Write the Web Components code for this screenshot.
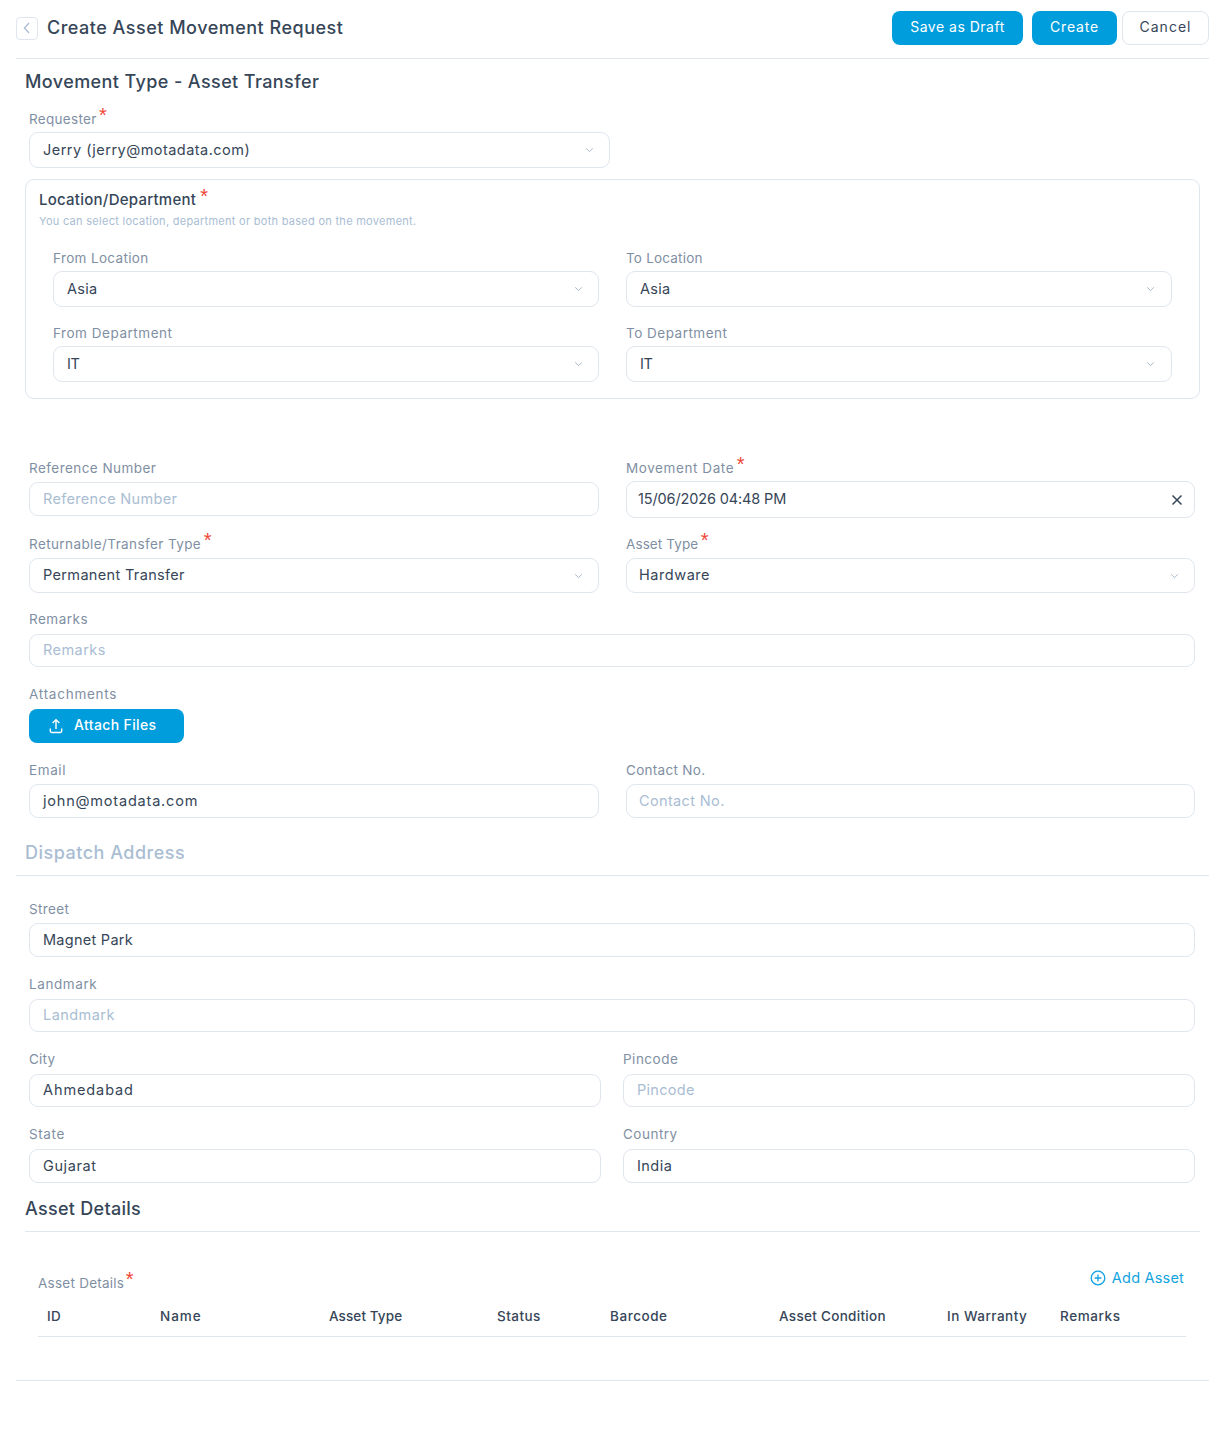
<!DOCTYPE html>
<html><head><meta charset="utf-8">
<style>
html,body{margin:0;padding:0;background:#fff}
body{font-family:Inter,"Noto Sans",sans-serif;color:#364658;font-size:14px;letter-spacing:.42px}
</style></head><body>
<asset-page>
  <page-header title="Create Asset Movement Request"></page-header>
  <form-title h="46" ls=".4" style="margin-left:9px">Movement Type - Asset Transfer</form-title>
  <form-row cols="581px" left="13" style="margin-top:1px">
    <form-field label="Requester" ls=".3" required><input-box chevron="20" h="36" ls=".47">Jerry (jerry@motadata.com)</input-box></form-field>
  </form-row>
  <loc-card title="Location/Department" hint="You can select location, department or both based on the movement.">
    <form-row cols="546px 546px" gap="27" left="27">
      <form-field label="From Location" ls=".35"><input-box chevron="20" h="36" ls=".3">Asia</input-box></form-field>
      <form-field label="To Location" ls=".2"><input-box chevron="21" h="36" ls=".3">Asia</input-box></form-field>
    </form-row>
    <form-row cols="546px 546px" gap="27" left="27" style="margin-top:13px">
      <form-field label="From Department" ls=".53"><input-box chevron="20" h="36" ls="-.4">IT</input-box></form-field>
      <form-field label="To Department" ls=".5"><input-box chevron="21" h="36" ls="-.4">IT</input-box></form-field>
    </form-row>
  </loc-card>
  <form-row style="margin-top:56px">
    <form-field label="Reference Number" ls=".45" lh="27"><input-box h="34" ls=".33" placeholder>Reference Number</input-box></form-field>
    <form-field label="Movement Date" ls=".58" required><input-box h="37" pad="11" ls="-.13" clear>15/06/2026 04:48 PM</input-box></form-field>
  </form-row>
  <form-row style="margin-top:13px">
    <form-field label="Returnable/Transfer Type" ls=".4" required lh="27"><input-box chevron="20" h="35" ls=".34">Permanent Transfer</input-box></form-field>
    <form-field label="Asset Type" ls=".1" required lh="27"><input-box chevron="20" h="35" pad="12" ls=".55">Hardware</input-box></form-field>
  </form-row>
  <form-row cols="1166px" style="margin-top:13px">
    <form-field label="Remarks" ls=".5" lh="28"><input-box h="33" placeholder>Remarks</input-box></form-field>
  </form-row>
  <form-row cols="1166px" style="margin-top:14px">
    <form-field label="Attachments" ls=".75" lh="28"><attach-button>Attach Files</attach-button></form-field>
  </form-row>
  <form-row style="margin-top:14px">
    <form-field label="Email" ls=".6" lh="27"><input-box h="34" ls=".8">john@motadata.com</input-box></form-field>
    <form-field label="Contact No." ls=".3" lh="27"><input-box h="34" pad="12" ls=".36" placeholder>Contact No.</input-box></form-field>
  </form-row>
  <form-title h="58" ls=".5" muted rule style="padding-left:9px;padding-bottom:10px">Dispatch Address</form-title>
  <form-row cols="1166px" style="margin-top:20px">
    <form-field label="Street" ls=".37" lh="27"><input-box h="34" ls=".27">Magnet Park</input-box></form-field>
  </form-row>
  <form-row cols="1166px" style="margin-top:14px">
    <form-field label="Landmark" ls=".6" lh="28"><input-box h="33" placeholder>Landmark</input-box></form-field>
  </form-row>
  <form-row cols="572px 572px" gap="22" style="margin-top:14px">
    <form-field label="City" lh="28"><input-box h="33" ls=".9">Ahmedabad</input-box></form-field>
    <form-field label="Pincode" ls=".5" lh="28"><input-box h="33" ls=".3" placeholder>Pincode</input-box></form-field>
  </form-row>
  <form-row cols="572px 572px" gap="22" style="margin-top:14px">
    <form-field label="State" ls=".6" lh="28"><input-box h="34" ls=".6">Gujarat</input-box></form-field>
    <form-field label="Country" ls=".5" lh="28"><input-box h="34">India</input-box></form-field>
  </form-row>
  <form-title h="49" ls=".28" rule style="margin:0 9px 0 9px">Asset Details</form-title>
  <asset-table></asset-table>
</asset-page>
<script>
const def=(n,html,init)=>customElements.define(n,class extends HTMLElement{
  connectedCallback(){if(this.shadowRoot)return;const r=this.attachShadow({mode:'open'});r.innerHTML=typeof html==='function'?html(this):html;init&&init(this,r);}
});
const star=`<span class="star">*</span>`;
const starCss=`.star{color:#ef4638;font-size:20px;line-height:1;font-family:"Liberation Sans",sans-serif;position:relative;top:-2px;margin-left:2.5px;letter-spacing:0;display:inline-block;height:14px}`;

def('asset-page',`<style>:host{display:block;box-sizing:border-box;width:1223px;height:1429px;padding:0 14px 0 16px;overflow:hidden}</style><slot></slot>`);

def('page-header',h=>`<style>
:host{display:flex;align-items:center;height:58px;border-bottom:1px solid #dfe6ef;box-sizing:content-box}
.back{width:20px;height:21px;border:1px solid #dfe6ef;border-radius:4px;display:flex;align-items:center;justify-content:center;margin-top:-2px}
h1{margin:-2px 0 0 9px;font:500 18px/24px Inter,sans-serif;letter-spacing:.5px;color:#364658;flex:1}
.btns{display:flex;align-items:center;margin-top:-3px}
</style>
<div class="back"><svg width="10" height="12" viewBox="0 0 10 12"><path d="M7 1 2.4 6 7 11" fill="none" stroke="#a9bbd0" stroke-width="1.3"/></svg></div>
<h1>${h.getAttribute('title')}</h1>
<div class="btns">
<action-button primary w="131" ls=".5">Save as Draft</action-button>
<action-button primary w="85" ls=".8" style="margin-left:9px">Create</action-button>
<action-button w="87" ls="1" style="margin-left:5px">Cancel</action-button>
</div>`);

def('action-button',h=>`<style>
:host{display:block}
div{box-sizing:border-box;height:34px;width:${h.getAttribute('w')}px;border-radius:8px;display:flex;align-items:center;justify-content:center;padding-bottom:2px;font:400 14px/20px Inter,sans-serif;letter-spacing:${h.getAttribute('ls')}px;
${h.hasAttribute('primary')?'background:#009ddc;color:#fff;':'background:#fff;border:1px solid #dfe6ef;color:#364658;'}}
</style><div><slot></slot></div>`);

def('form-title',h=>`<style>
:host{display:flex;box-sizing:border-box;height:${h.getAttribute('h')}px;align-items:${h.hasAttribute('rule')?'flex-end':'center'};${h.hasAttribute('rule')?'border-bottom:1px solid #dfe6ef;padding-bottom:10px;':''}
font:500 18px/24px Inter,sans-serif;letter-spacing:${h.getAttribute('ls')}px;color:${h.hasAttribute('muted')?'#a9bdd3':'#364658'}}
</style><slot></slot>`);

def('form-row',h=>`<style>
:host{display:grid;grid-template-columns:${h.getAttribute('cols')||'570px 569px'};column-gap:${h.getAttribute('gap')||27}px;padding-left:${h.getAttribute('left')||13}px}
</style><slot></slot>`);

def('form-field',h=>`<style>
:host{display:block}
.l{height:${h.getAttribute('lh')||26}px;font:400 13.5px/26px Inter,sans-serif;letter-spacing:${h.getAttribute('ls')||'.2'}px;color:#7f8fa3;white-space:nowrap}
${starCss}
</style><div class="l">${h.getAttribute('label')}${h.hasAttribute('required')?star:''}</div><slot></slot>`);

def('input-box',h=>{
 const ch=h.getAttribute('chevron'),H=+h.getAttribute('h');
 return `<style>
:host{display:flex;box-sizing:border-box;align-items:center;height:${H}px;border:1px solid #dfe6ef;border-radius:9px;padding:0 13px ${H%2?1:0}px ${h.getAttribute('pad')||13}px;position:relative;
font:400 14.5px/20px Inter,sans-serif;letter-spacing:${h.getAttribute('ls')||'.45'}px;color:${h.hasAttribute('placeholder')?'#a9bdd3':'#364658'}}
.c{position:absolute;top:50%;margin-top:-4px;right:${ch-5}px}
.x{position:absolute;top:50%;margin-top:-6px;right:11px}
</style><slot></slot>
${ch?`<svg class="c" width="9" height="8" viewBox="0 0 9 8"><path d="M1.2 2.4 4.5 5.6 7.8 2.4" fill="none" stroke="#a9b8ca" stroke-width="1"/></svg>`:''}
${h.hasAttribute('clear')?`<svg class="x" width="12" height="12" viewBox="0 0 12 12"><path d="M1.5 1.5l9 9m0-9l-9 9" fill="none" stroke="#364658" stroke-width="1.5"/></svg>`:''}`;
});

def('loc-card',h=>`<style>
:host{display:block;box-sizing:border-box;margin:11px 9px 0 9px;height:220px;border:1px solid #dfe6ef;border-radius:9px;padding:8px 0 0 0}
.t{margin-left:13px;height:21px;font:500 15px/20px Inter,sans-serif;letter-spacing:.25px;color:#364658}
.h{margin:4px 0 16px 13px;font:400 11px/16px Inter,sans-serif;letter-spacing:.28px;color:#a9bdd3}
${starCss}
.t .star{margin-left:4px}
</style><div class="t">${h.getAttribute('title')}${star}</div><div class="h">${h.getAttribute('hint')}</div><slot></slot>`);

def('attach-button',`<style>
:host{display:flex;box-sizing:border-box;width:155px;height:34px;border-radius:8px;background:#009ddc;color:#fff;align-items:center;padding:0 0 2px 20px;font:500 14px/20px Inter,sans-serif;letter-spacing:.37px}
svg{margin:2px 11px 0 0;flex:none}
</style><svg width="14" height="16" viewBox="0 0 14 16"><path d="M7 11V2M3.6 5 7 1.8 10.4 5M1.3 10.5v2.6c0 .8.6 1.4 1.4 1.4h8.6c.8 0 1.4-.6 1.4-1.4v-2.6" fill="none" stroke="#fff" stroke-width="1.4"/></svg><slot></slot>`);

def('asset-table',`<style>
:host{display:block;margin-left:22px;width:1148px;position:relative}
.top{height:84px;position:relative}
.lab{position:absolute;left:0;top:38px;font:400 13.5px/26px Inter,sans-serif;letter-spacing:.25px;color:#7f8fa3}
${starCss}
.lab .star{margin-left:1.5px}
.add{position:absolute;right:2px;top:36px;display:flex;align-items:center;color:#13a3e0;font:400 14.5px/20px Inter,sans-serif;letter-spacing:.2px}
.add svg{margin-right:6px}
.head{display:grid;grid-template-columns:113px 169px 168px 113px 169px 168px 113px 135px;height:20px;border-bottom:1px solid #dfe6ef;align-items:start;font:500 13.5px/2px Inter,sans-serif}
.head span{padding-left:9px;color:#364658;line-height:0;white-space:nowrap}
.foot{margin:43px 0 0 -22px;width:1193px;border-bottom:1px solid #dfe6ef}
</style>
<div class="top"><div class="lab">Asset Details${star}</div>
<div class="add"><svg width="16" height="16" viewBox="0 0 16 16"><circle cx="8" cy="8" r="6.8" fill="none" stroke="#13a3e0" stroke-width="1.3"/><path d="M8 4.6v6.8M4.6 8h6.8" stroke="#13a3e0" stroke-width="1.3"/></svg>Add Asset</div></div>
<div class="head"><span style="letter-spacing:.3px">ID</span><span style="letter-spacing:.95px">Name</span><span style="letter-spacing:.1px">Asset Type</span><span style="letter-spacing:.45px">Status</span><span style="letter-spacing:.55px">Barcode</span><span style="letter-spacing:.3px">Asset Condition</span><span style="letter-spacing:.5px">In Warranty</span><span style="letter-spacing:.6px">Remarks</span></div>
<div class="foot"></div>`);
</script>
</body></html>
